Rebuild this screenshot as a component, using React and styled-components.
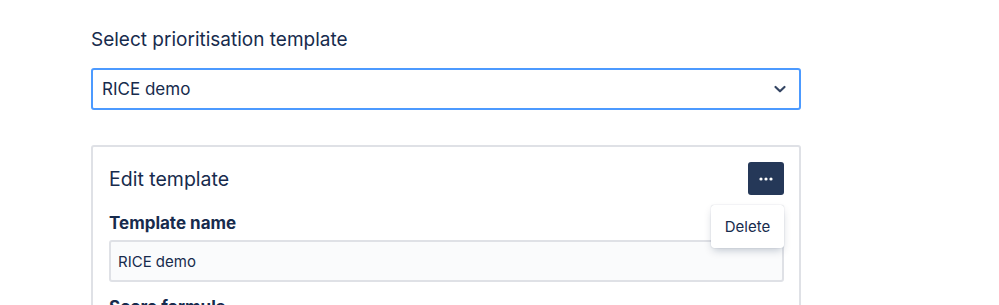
import React from "react";
import styled, { createGlobalStyle } from "styled-components";

const Global = createGlobalStyle`
  html, body { margin: 0; padding: 0; background: #ffffff; }
  body { font-family: Inter, "Noto Sans", sans-serif; color: #172b4d; -webkit-font-smoothing: antialiased; }
`;

const Page = styled.div`
  padding: 28px 0 0 91px;
  width: 710px;
`;

const Heading = styled.div`
  font-size: 19px;
  line-height: 24px;
  font-weight: 400;
  color: #172b4d;
  margin-bottom: 16px;
`;

const Select = styled.div`
  box-sizing: border-box;
  height: 42px;
  border: 2px solid #4c9aff;
  border-radius: 3px;
  display: flex;
  align-items: center;
  justify-content: space-between;
  padding: 0 12px 0 9px;
  font-size: 17px;
  color: #172b4d;
  margin-bottom: 35px;
`;

const Card = styled.div`
  box-sizing: border-box;
  border: 2px solid #dfe1e6;
  border-radius: 3px;
  padding: 15px 16px 0 16px;
  height: 200px;
`;

const Header = styled.div`
  position: relative;
  display: flex;
  align-items: center;
  justify-content: space-between;
  height: 33px;
  margin-bottom: 17px;
`;

const Title = styled.div`
  font-size: 19.5px;
  font-weight: 400;
  color: #172b4d;
`;

const MoreButton = styled.button`
  width: 36px;
  height: 33px;
  border: none;
  border-radius: 3px;
  background: #253858;
  display: flex;
  align-items: center;
  justify-content: center;
  padding: 0;
  margin-right: -1px;
`;

const Menu = styled.div`
  position: absolute;
  right: -1px;
  top: 43px;
  width: 73px;
  height: 43px;
  background: #ffffff;
  border-radius: 3px;
  box-shadow: 0 4px 8px -2px rgba(9, 30, 66, 0.25), 0 0 1px rgba(9, 30, 66, 0.31);
  display: flex;
  align-items: center;
  justify-content: center;
  font-size: 15px;
  color: #172b4d;
  z-index: 2;
`;

const Label = styled.div`
  font-size: 17px;
  font-weight: 700;
  line-height: 22px;
  color: #172b4d;
  margin-bottom: 6px;
`;

const Input = styled.div`
  box-sizing: border-box;
  height: 42px;
  background: #fafbfc;
  border: 2px solid #dfe1e6;
  border-radius: 3px;
  display: flex;
  align-items: center;
  padding: 0 7px;
  font-size: 15px;
  color: #172b4d;
  margin-right: -1px;
  margin-bottom: 14px;
`;

const Chevron = () => (
  <svg width="14" height="14" viewBox="0 0 14 14" fill="none">
    <path d="M2.5 5 L7 9.3 L11.5 5" stroke="#344563" strokeWidth="2.2" strokeLinecap="round" strokeLinejoin="round" />
  </svg>
);

const Dots = () => (
  <svg width="14" height="4" viewBox="0 0 14 4">
    <circle cx="2" cy="2" r="1.6" fill="#ffffff" />
    <circle cx="7" cy="2" r="1.6" fill="#ffffff" />
    <circle cx="12" cy="2" r="1.6" fill="#ffffff" />
  </svg>
);

export default function App() {
  return (
    <>
      <Global />
      <Page>
        <Heading>Select prioritisation template</Heading>
        <Select>
          <span>RICE demo</span>
          <Chevron />
        </Select>
        <Card>
          <Header>
            <Title>Edit template</Title>
            <MoreButton aria-label="More">
              <Dots />
            </MoreButton>
            <Menu>Delete</Menu>
          </Header>
          <Label>Template name</Label>
          <Input>RICE demo</Input>
          <Label>Score formula</Label>
        </Card>
      </Page>
    </>
  );
}
